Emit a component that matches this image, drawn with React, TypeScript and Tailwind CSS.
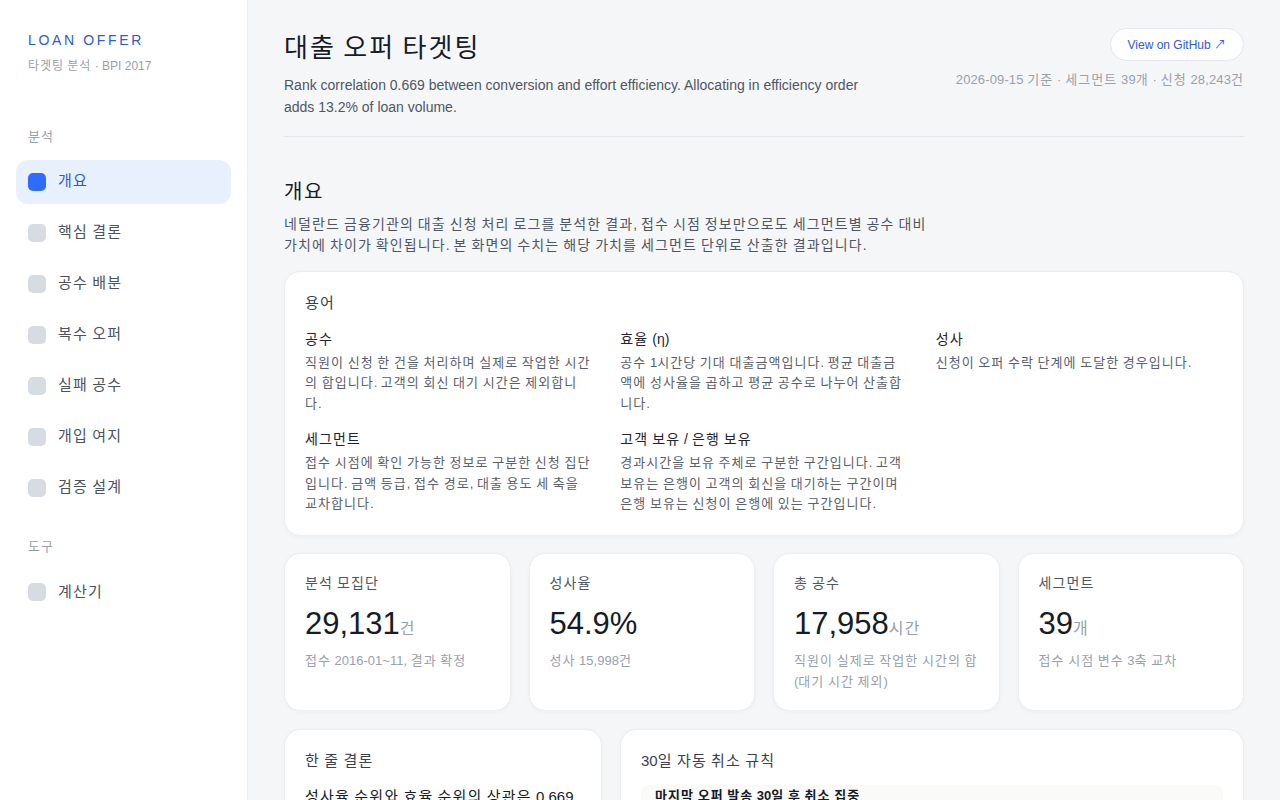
import React from "react";

const navMain = ["개요", "핵심 결론", "공수 배분", "복수 오퍼", "실패 공수", "개입 여지", "검증 설계"];

const terms = [
  { t: "공수", d: "직원이 신청 한 건을 처리하며 실제로 작업한 시간의 합입니다. 고객의 회신 대기 시간은 제외합니다." },
  { t: "효율 (η)", d: "공수 1시간당 기대 대출금액입니다. 평균 대출금액에 성사율을 곱하고 평균 공수로 나누어 산출합니다." },
  { t: "성사", d: "신청이 오퍼 수락 단계에 도달한 경우입니다." },
  { t: "세그먼트", d: "접수 시점에 확인 가능한 정보로 구분한 신청 집단입니다. 금액 등급, 접수 경로, 대출 용도 세 축을 교차합니다." },
  { t: "고객 보유 / 은행 보유", d: "경과시간을 보유 주체로 구분한 구간입니다. 고객 보유는 은행이 고객의 회신을 대기하는 구간이며 은행 보유는 신청이 은행에 있는 구간입니다." },
];

const stats = [
  { l: "분석 모집단", v: "29,131", u: "건", s: "접수 2016-01~11, 결과 확정" },
  { l: "성사율", v: "54.9%", u: "", s: "성사 15,998건" },
  { l: "총 공수", v: "17,958", u: "시간", s: "직원이 실제로 작업한 시간의 합 (대기 시간 제외)" },
  { l: "세그먼트", v: "39", u: "개", s: "접수 시점 변수 3축 교차" },
];

const HANGUL = /([\uAC00-\uD7A3\u3130-\u318F]+)/;

function K({ children }: { children: string }) {
  const parts = children.split(HANGUL);
  return (
    <>
      {parts.map((p, i) =>
        i % 2 === 1 ? (
          <span key={i} className="tracking-[0.08em]">
            {p}
          </span>
        ) : (
          <React.Fragment key={i}>{p}</React.Fragment>
        )
      )}
    </>
  );
}

function NavItem({ label, active }: { label: string; active?: boolean }) {
  return (
    <div
      className={
        active
          ? "flex items-center gap-3 h-[44px] px-3 rounded-xl bg-[#e8effd] text-[#2d5bd4]"
          : "flex items-center gap-3 h-[44px] px-3 rounded-xl text-[#4b5260]"
      }
    >
      <span className={active ? "w-[18px] h-[18px] rounded-[5px] bg-[#2f6bff]" : "w-[18px] h-[18px] rounded-[5px] bg-[#d7dbe2]"} />
      <span className="text-[15px]">
        <K>{label}</K>
      </span>
    </div>
  );
}

const card = "bg-white border border-[#eceef2] rounded-2xl shadow-[0_1px_4px_rgba(20,30,50,0.04)]";

export default function App() {
  return (
    <div
      className="flex min-h-screen bg-[#f5f6f8] text-[#1c2130]"
      style={{ fontFamily: '"Liberation Sans", "Noto Sans CJK KR", sans-serif' }}
    >
      <aside className="w-[248px] shrink-0 bg-white border-r border-[#eceef2] px-4 pt-[30px]">
        <div className="px-3">
          <div className="text-[14px] tracking-[0.19em] text-[#2d5bd4] font-medium">LOAN OFFER</div>
          <div className="text-[12px] text-[#9aa0aa] mt-[6px]">
            <K>타겟팅 분석 · BPI 2017</K>
          </div>
        </div>
        <div className="px-3 mt-[52px] text-[13px] text-[#9aa0aa]">
          <K>분석</K>
        </div>
        <div className="mt-[13px] flex flex-col gap-[7px]">
          {navMain.map((n, i) => (
            <NavItem key={n} label={n} active={i === 0} />
          ))}
        </div>
        <div className="px-3 mt-[27px] text-[13px] text-[#9aa0aa]">
          <K>도구</K>
        </div>
        <div className="mt-[14px] flex flex-col gap-[7px]">
          <NavItem label="계산기" />
        </div>
      </aside>

      <main className="flex-1 px-9 pt-[28px] overflow-hidden h-screen">
        <header className="flex justify-between items-start pb-[18px] border-b border-[#e6e8ec]">
          <div>
            <h1 className="text-[26px] leading-[36px] text-[#161b26] mt-[2px]">
              <K>대출 오퍼 타겟팅</K>
            </h1>
            <p className="mt-[8px] text-[14px] leading-[22px] text-[#4f5663] max-w-[590px]">
              Rank correlation 0.669 between conversion and effort efficiency. Allocating in efficiency order adds 13.2% of loan volume.
            </p>
          </div>
          <div className="flex flex-col items-end">
            <div className="h-[33px] px-[17px] rounded-full bg-white border border-[#e4e7ec] flex items-center text-[12px] text-[#2d5bd4]">
              View on GitHub ↗
            </div>
            <div className="mt-[9px] text-[13px] tracking-[0.01em] text-[#9aa0aa]">
              <K>2026-09-15 기준 · 세그먼트 39개 · 신청 28,243건</K>
            </div>
          </div>
        </header>

        <section className="mt-[41px]">
          <h2 className="text-[20px] leading-[28px] text-[#161b26]">
            <K>개요</K>
          </h2>
          <p className="mt-[8px] text-[14px] leading-[21px] text-[#4f5663] max-w-[660px]">
            <K>
              네덜란드 금융기관의 대출 신청 처리 로그를 분석한 결과, 접수 시점 정보만으로도 세그먼트별 공수 대비 가치에 차이가 확인됩니다. 본 화면의 수치는 해당 가치를 세그먼트 단위로 산출한 결과입니다.
            </K>
          </p>

          <div className={`mt-[15px] ${card} px-5 pt-[20px] pb-[20px]`}>
            <div className="text-[15px] text-[#3a404c]">
              <K>용어</K>
            </div>
            <div className="mt-[14px] grid grid-cols-3 gap-x-7 gap-y-[15px]">
              {terms.map((t) => (
                <div key={t.t}>
                  <div className="text-[14px] leading-[20px] text-[#1f2430]">
                    <K>{t.t}</K>
                  </div>
                  <div className="mt-[4px] text-[13px] leading-[20.5px] text-[#5a606c]">
                    <K>{t.d}</K>
                  </div>
                </div>
              ))}
            </div>
          </div>

          <div className="mt-[17px] grid grid-cols-4 gap-[18px]">
            {stats.map((s) => (
              <div key={s.l} className={`${card} px-5 pt-[19px] h-[158px]`}>
                <div className="text-[14px] text-[#4f5663]">
                  <K>{s.l}</K>
                </div>
                <div className="mt-[12px] flex items-baseline">
                  <span className="text-[31px] leading-[36px] text-[#161b26]">{s.v}</span>
                  {s.u && (
                    <span className="text-[16px] text-[#9aa0aa]">
                      <K>{s.u}</K>
                    </span>
                  )}
                </div>
                <div className="mt-[8px] text-[13px] leading-[21px] text-[#9aa0aa]">
                  <K>{s.s}</K>
                </div>
              </div>
            ))}
          </div>

          <div className="mt-[18px] grid grid-cols-[318px_1fr] gap-[18px]">
            <div className={`${card} px-5 pt-[20px] h-[200px]`}>
              <div className="text-[15px] text-[#3a404c]">
                <K>한 줄 결론</K>
              </div>
              <div className="mt-[12px] text-[15px] leading-[26px] text-[#161b26]">
                <K>성사율 순위와 효율 순위의 상관은 0.669</K>
              </div>
            </div>
            <div className={`${card} px-5 pt-[20px] h-[200px]`}>
              <div className="text-[15px] text-[#3a404c]">
                <K>30일 자동 취소 규칙</K>
              </div>
              <div className="mt-[13px] bg-[#fafaf8] rounded-lg px-[14px] pt-[1px] pb-3">
                <div className="text-[13px] leading-[20px] font-bold text-[#161b26]">
                  <K>마지막 오퍼 발송 30일 후 취소 집중</K>
                </div>
              </div>
            </div>
          </div>
        </section>
      </main>
    </div>
  );
}
